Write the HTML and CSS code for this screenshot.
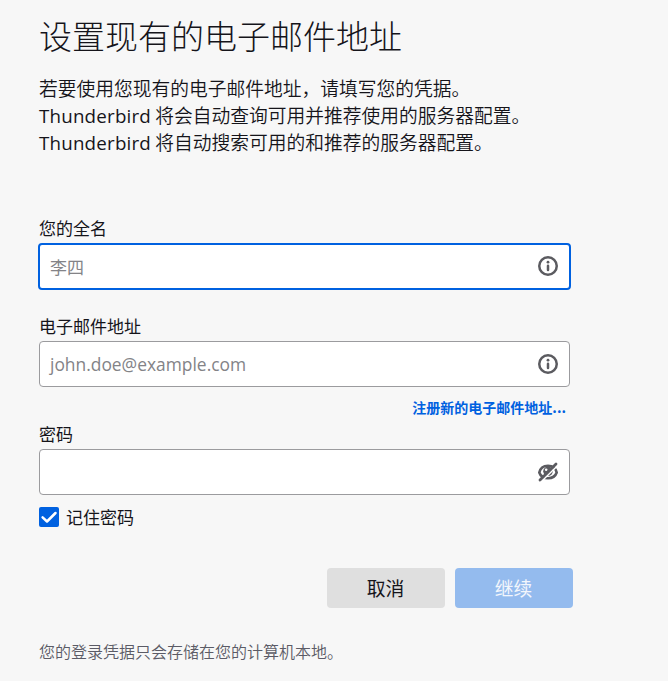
FILE: index.html
```html
<!DOCTYPE html>
<html lang="zh-CN">
<head>
<meta charset="utf-8">
<title>设置现有的电子邮件地址</title>
<link rel="stylesheet" href="styles.css">
</head>
<body>
<main class="setup">
  <h1 class="title">设置现有的电子邮件地址</h1>
  <p class="intro">若要使用您现有的电子邮件地址，请填写您的凭据。<br><span class="brand">Thunderbird</span> 将会自动查询可用并推荐使用的服务器配置。<br><span class="brand">Thunderbird</span> 将自动搜索可用的和推荐的服务器配置。</p>
  <form class="form">
    <label class="label label-name">您的全名</label>
    <div class="field field-focus">
      <span class="placeholder">李四</span>
      <svg class="icon" viewBox="0 0 20 20"><circle cx="10" cy="10" r="8.75" fill="none" stroke="currentColor" stroke-width="2.5"/><circle cx="10" cy="6.2" r="1.4" fill="currentColor"/><path d="M10 9.7v4.4" stroke="currentColor" stroke-width="2.5" stroke-linecap="round"/></svg>
    </div>
    <label class="label label-email">电子邮件地址</label>
    <div class="field">
      <span class="placeholder latin">john.doe@example.com</span>
      <svg class="icon" viewBox="0 0 20 20"><circle cx="10" cy="10" r="8.75" fill="none" stroke="currentColor" stroke-width="2.5"/><circle cx="10" cy="6.2" r="1.4" fill="currentColor"/><path d="M10 9.7v4.4" stroke="currentColor" stroke-width="2.5" stroke-linecap="round"/></svg>
    </div>
    <a class="link">注册新的电子邮件地址...</a>
    <label class="label">密码</label>
    <div class="field">
      <svg class="icon" viewBox="0 0 20 20"><path d="M1.300 10.500C2.300 6 6 3.700 10 3.700s7.700 2.300 8.700 6.800C17.500 14.200 14 16.200 10 16.200S2.500 14.200 1.300 10.500z" fill="none" stroke="currentColor" stroke-width="2.600"/><circle cx="10" cy="9.300" r="4.800" fill="currentColor"/><circle cx="8.200" cy="7.800" r="1.300" fill="#fff"/><path d="M3.400 19.400L19.600 3.600" stroke="#fff" stroke-width="1.600"/><path d="M2 17.900L18 2.100" stroke="currentColor" stroke-width="2.800" stroke-linecap="round"/></svg>
    </div>
    <div class="remember">
      <span class="checkbox"><svg viewBox="0 0 20 20"><path d="M3.600 10.300L8 14.500L16.500 6" fill="none" stroke="#fff" stroke-width="2.500" stroke-linecap="round" stroke-linejoin="round"/></svg></span>
      <span class="remember-text">记住密码</span>
    </div>
    <div class="actions">
      <button class="button" type="button">取消</button>
      <button class="button primary" type="button" disabled>继续</button>
    </div>
  </form>
  <p class="note">您的登录凭据只会存储在您的计算机本地。</p>
</main>
</body>
</html>
```
FILE: styles.css
```css
* {
  box-sizing: border-box;
}

body {
  margin: 0;
  background: #f7f7f7;
  color: #15141a;
  font-family: "Noto Sans CJK SC", sans-serif;
  font-size: 17px;
}

.setup {
  width: 573px;
  padding: 14px 0 0 39px;
}

.title {
  margin: 0;
  height: 60px;
  font-size: 33px;
  font-weight: 300;
  line-height: 42px;
  white-space: nowrap;
}

.intro {
  margin: 0 0 59px;
  height: 81px;
  font-size: 18.75px;
  font-weight: 350;
  line-height: 27px;
  white-space: nowrap;
}

.brand,
.latin {
  font-family: "Open Sans", "Noto Sans", sans-serif;
  line-height: 1;
}

.brand {
  font-weight: 500;
  letter-spacing: 0.2px;
}

.form {
  display: flex;
  flex-direction: column;
}

.label {
  height: 24px;
  margin-bottom: 6px;
  line-height: 29px;
}

.label-name {
  line-height: 27px;
}

.label-email {
  margin-top: 21px;
}

.field {
  display: flex;
  align-items: center;
  width: 531px;
  height: 46px;
  padding: 0 11px 0 10px;
  border: 1px solid #9b9b9e;
  border-radius: 4px;
  background: #fff;
}

.field-focus {
  width: 533px;
  height: 47px;
  margin: -1px 0 0 -1px;
  padding: 0 11px 1px 10px;
  border: 2px solid #0061e0;
}

.placeholder {
  color: #838387;
}

.latin {
  padding-top: 2px;
  font-size: 17.4px;
}

.icon {
  width: 20px;
  height: 20px;
  margin-left: auto;
  color: #5b5b60;
}

.link {
  align-self: flex-end;
  height: 32px;
  margin: 0 7px 0 0;
  color: #0061e0;
  font-size: 14px;
  font-weight: 700;
  line-height: 40px;
}

.remember {
  display: flex;
  align-items: center;
  gap: 7px;
  height: 20px;
  margin-top: 12px;
}

.remember-text {
  padding-bottom: 2px;
}

.checkbox {
  width: 20px;
  height: 20px;
  border-radius: 2px;
  background: #0061e0;
}

.checkbox svg {
  display: block;
}

.actions {
  display: flex;
  justify-content: flex-end;
  gap: 10px;
  margin-top: 41px;
}

.button {
  width: 118px;
  height: 40px;
  padding: 0 1px 2px 0;
  border: 0;
  border-radius: 4px;
  background: #dfdfdf;
  color: #15141a;
  font: 18.8px "Noto Sans CJK SC", sans-serif;
}

.primary {
  background: #94bbee;
  color: #f2f6fc;
}

.note {
  margin: 31px 0 0;
  color: #5b5b66;
  font-size: 16px;
  font-weight: 350;
  line-height: 24px;
}
```
